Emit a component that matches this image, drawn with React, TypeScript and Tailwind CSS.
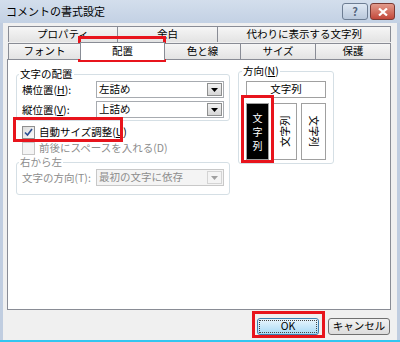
import React from "react";

const F = { fontFamily: '"Noto Sans CJK JP", "Noto Sans", sans-serif' };

function Arrow({ disabled }: { disabled?: boolean }) {
  return (
    <svg width="7" height="4" viewBox="0 0 7 4">
      <path d="M0 0H7L3.5 4Z" fill={disabled ? "#a0a0a0" : "#000"} />
    </svg>
  );
}

function Select({ value, disabled }: { value: string; disabled?: boolean }) {
  return (
    <div
      className={`flex h-[17px] w-[128px] items-center border ${
        disabled ? "border-[#c8c8c8] bg-[#f4f4f4] text-[#8d8d8d]" : "border-[#a7abb0] bg-white text-black"
      }`}
    >
      <span className="flex-1 pl-[2px] leading-none">{value}</span>
      <div
        className={`mr-[1px] flex h-[13px] w-[15px] items-center justify-center border ${
          disabled ? "border-[#d4d4d4] bg-[#f4f4f4]" : "border-[#8e8f8f] bg-gradient-to-b from-[#f2f2f2] to-[#d6d6d6]"
        }`}
      >
        <Arrow disabled={disabled} />
      </div>
    </div>
  );
}

function Tab({ label, w }: { label: string; w: string }) {
  return (
    <div
      className={`${w} -ml-[1px] flex h-[16px] items-center justify-center border border-b-0 border-[#898c95] bg-gradient-to-b from-[#f6f6f6] to-[#e3e3e3] leading-none first:ml-0`}
    >
      {label}
    </div>
  );
}

export default function App() {
  return (
    <div
      className="relative h-[342px] w-[400px] overflow-hidden bg-[#c0cde0] text-[10.5px] text-black"
      style={F}
    >
      {/* title bar */}
      <div className="flex h-[23px] items-center bg-gradient-to-b from-[#d3deec] to-[#c3d1e4] pl-[6px] pr-[5px]">
        <span className="flex-1 text-[11px] leading-none">コメントの書式設定</span>
        <div className="flex items-center gap-[2px]">
          <div className="flex h-[17px] w-[26px] items-center justify-center rounded-[3px] border border-[#6d7d93] bg-gradient-to-b from-[#dfe8f3] to-[#b9c8dc] text-[11px] font-bold leading-none text-[#56667c]">
            ?
          </div>
          <div className="flex h-[17px] w-[25px] items-center justify-center rounded-[3px] border border-[#7a3a34] bg-gradient-to-b from-[#e29b8d] to-[#c2473a]">
            <svg width="10" height="8" viewBox="0 0 10 8">
              <path d="M1 0.5L9 7.5M9 0.5L1 7.5" stroke="#fff" strokeWidth="2.2" />
            </svg>
          </div>
        </div>
      </div>

      {/* dialog body */}
      <div className="mx-[3px] flex h-[317px] flex-col bg-[#f0f0f0] pl-[4px] pr-[6px] pt-[3px]">
        {/* tabs */}
        <div className="ml-[1px] flex">
          <Tab label="プロパティ" w="w-[110px]" />
          <Tab label="余白" w="w-[102px]" />
          <Tab label="代わりに表示する文字列" w="w-[174px]" />
        </div>
        <div className="relative z-10 ml-[1px] flex items-end">
          <Tab label="フォント" w="w-[73px]" />
          <div className="-mb-[1px] -ml-[1px] flex h-[18px] w-[85px] items-center justify-center border border-b-0 border-[#898c95] bg-white leading-none">
            配置
          </div>
          <Tab label="色と線" w="w-[77px]" />
          <Tab label="サイズ" w="w-[76px]" />
          <Tab label="保護" w="w-[76px]" />
        </div>

        {/* panel */}
        <div className="flex h-[251px] gap-[8px] border border-[#898c95] bg-white pl-[8px] pt-[8px]">
          {/* left column */}
          <div className="flex w-[214px] flex-col">
            <fieldset className="h-[53px] rounded-[3px] border border-[#d5dfe5] px-[5px]">
              <legend className="-ml-[3px] px-[1px] leading-[12px]">文字の配置</legend>
              <div className="mt-[1px] flex h-[17px] items-center justify-between">
                <span>
                  横位置(<span className="underline">H</span>):
                </span>
                <Select value="左詰め" />
              </div>
              <div className="mt-[3px] flex h-[17px] items-center justify-between">
                <span>
                  縦位置(<span className="underline">V</span>):
                </span>
                <Select value="上詰め" />
              </div>
            </fieldset>
            <div className="mt-[5px] flex h-[13px] items-center gap-[4px] pl-[6px]">
              <div className="flex h-[13px] w-[13px] items-center justify-center border border-[#8f8f8f] bg-gradient-to-br from-[#dcdcdc] to-[#fbfbfb]">
                <svg width="9" height="9" viewBox="0 0 9 9">
                  <path d="M1 4.5L3.5 7L8 1" stroke="#2a4d92" strokeWidth="1.6" fill="none" />
                </svg>
              </div>
              <span className="leading-none">
                自動サイズ調整(<span className="underline">U</span>)
              </span>
            </div>
            <div className="mt-[3px] flex h-[13px] items-center gap-[4px] pl-[6px] text-[#8d8d8d]">
              <div className="h-[13px] w-[13px] border border-[#c6c6c6] bg-[#f4f4f4]" />
              <span className="leading-none">前後にスペースを入れる(D)</span>
            </div>
            <fieldset className="mt-[1px] h-[39px] rounded-[3px] border border-[#d5dfe5] px-[5px] text-[#8d8d8d]">
              <legend className="-ml-[3px] px-[1px] leading-[12px]">右から左</legend>
              <div className="mt-[1px] flex h-[17px] items-center justify-between">
                <span>文字の方向(T):</span>
                <Select value="最初の文字に依存" disabled />
              </div>
            </fieldset>
          </div>

          {/* right column */}
          <fieldset className="-mt-[3px] h-[99px] w-[96px] rounded-[3px] border border-[#d5dfe5] px-[7px]">
            <legend className="-ml-[4px] px-[1px] leading-[12px]">
              方向(<span className="underline">N</span>)
            </legend>
            <div className="mt-[4px] flex h-[17px] items-center justify-center border border-[#a0a0a0] leading-none">
              文字列
            </div>
            <div className="mt-[5px] flex h-[57px] gap-[4px]">
              <div className="flex w-[23px] flex-col items-center justify-center border border-[#a0a0a0] bg-black text-[10px] leading-[14px] text-white">
                <span>文</span>
                <span>字</span>
                <span>列</span>
              </div>
              <div className="flex w-[24px] items-center justify-center border border-[#a0a0a0]">
                <span className="-rotate-90 whitespace-nowrap leading-none">文字列</span>
              </div>
              <div className="flex w-[25px] items-center justify-center border border-[#a0a0a0]">
                <span className="rotate-90 whitespace-nowrap leading-none">文字列</span>
              </div>
            </div>
          </fieldset>
        </div>

        {/* buttons */}
        <div className="flex justify-end gap-[9px] pr-[1px] pt-[8px]">
          <div className="flex h-[17px] w-[62px] items-center justify-center rounded-[3px] border border-[#3c7fb1] bg-gradient-to-b from-[#eaf6fd] to-[#a7d9f5] p-[1px]">
            <div className="flex h-full w-full items-center justify-center border border-dotted border-[#444] leading-none">
              OK
            </div>
          </div>
          <div className="flex h-[17px] w-[62px] items-center justify-center rounded-[3px] border border-[#707070] bg-gradient-to-b from-[#f2f2f2] to-[#dcdcdc] leading-none">
            キャンセル
          </div>
        </div>
      </div>
      <div className="h-[2px] bg-[#32c6f0]" />

      {/* red highlight boxes */}
      <div className="absolute left-[78px] top-[36px] h-[26px] w-[88px] border-[3px] border-[#e8141c]" />
      <div className="absolute left-[13px] top-[117px] h-[25px] w-[110px] border-[3px] border-[#e8141c]" />
      <div className="absolute left-[241px] top-[95px] h-[68px] w-[33px] border-[3px] border-[#e8141c]" />
      <div className="absolute left-[252px] top-[311px] h-[27px] w-[73px] border-[3px] border-[#e8141c]" />
    </div>
  );
}
